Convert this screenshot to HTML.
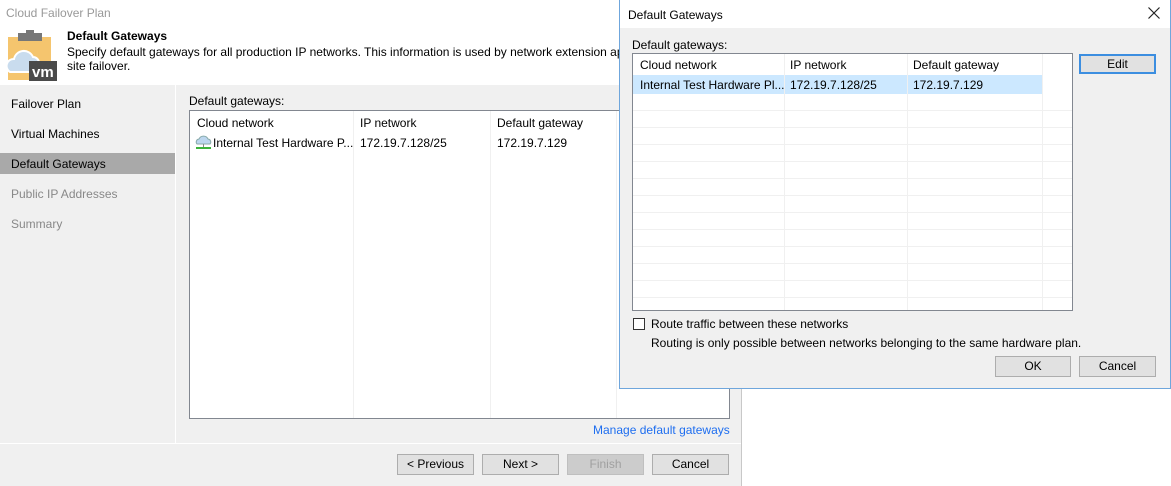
<!DOCTYPE html>
<html><head><style>
*{margin:0;padding:0;box-sizing:border-box}
body{width:1171px;height:486px;position:relative;background:#fff;font-family:"Liberation Sans",sans-serif;font-size:12px;color:#000;overflow:hidden}
.a{position:absolute;white-space:nowrap}
.btn{position:absolute;background:#e1e1e1;border:1px solid #adadad;text-align:center;line-height:19px;font-size:12px}
</style></head><body>
<!-- main window -->
<div class="a" style="left:0;top:0;width:742px;height:486px;background:#fff;border-right:1px solid #c8c8c8"></div>
<div class="a" style="left:6px;top:6px;color:#999;font-size:12px">Cloud Failover Plan</div>
<svg class="a" style="left:7px;top:29px" width="50" height="52" viewBox="0 0 50 52">
<rect x="1" y="8" width="43" height="43" fill="#f5c56e"/>
<rect x="11" y="4" width="24" height="8" fill="#777"/><rect x="19" y="1" width="8" height="6" fill="#777"/>
<path d="M3 43 a7 7 0 0 1 4 -13 a10 10 0 0 1 19 -2 a6 6 0 0 1 6 6 L32 43 Z" fill="#c9dcee" stroke="#fff" stroke-width="2"/>
<rect x="22" y="32" width="28" height="20" fill="#4a4a4a"/>
<text x="25" y="48" fill="#fff" font-size="15" font-weight="bold" font-family="Liberation Sans,sans-serif">vm</text>
</svg>
<div class="a" style="left:67px;top:29px;font-weight:bold">Default Gateways</div>
<div class="a" style="left:67px;top:45px">Specify default gateways for all production IP networks. This information is used by network extension app</div>
<div class="a" style="left:67px;top:59px">site failover.</div>
<!-- grey areas -->
<div class="a" style="left:0;top:85px;width:741px;height:401px;background:#f0f0f0"></div>
<div class="a" style="left:175px;top:85px;width:1px;height:358px;background:#fff"></div>
<div class="a" style="left:0;top:443px;width:741px;height:1px;background:#fff"></div>
<div class="a" style="left:0;top:153px;width:175px;height:21px;background:#a9a9a9"></div>
<div class="a" style="left:11px;top:97px">Failover Plan</div>
<div class="a" style="left:11px;top:127px">Virtual Machines</div>
<div class="a" style="left:11px;top:157px">Default Gateways</div>
<div class="a" style="left:11px;top:187px;color:#888">Public IP Addresses</div>
<div class="a" style="left:11px;top:217px;color:#888">Summary</div>
<div class="a" style="left:189px;top:94px">Default gateways:</div>
<div class="a" style="left:189px;top:110px;width:541px;height:309px;background:#fff;border:1px solid #828790"></div>
<div class="a" style="left:353px;top:111px;width:1px;height:307px;background:#f0f0f0"></div>
<div class="a" style="left:490px;top:111px;width:1px;height:307px;background:#f0f0f0"></div>
<div class="a" style="left:616px;top:111px;width:1px;height:307px;background:#f0f0f0"></div>
<div class="a" style="left:197px;top:116px">Cloud network</div>
<div class="a" style="left:360px;top:116px">IP network</div>
<div class="a" style="left:497px;top:116px">Default gateway</div>
<svg class="a" style="left:195px;top:134px" width="17" height="16" viewBox="0 0 17 16"><path d="M2 10 a3 3 0 0 1 2-5 a5 5 0 0 1 9 0 a3 3 0 0 1 2 5Z" fill="#bcd6ee" stroke="#8aa" stroke-width="1"/><rect x="8" y="10" width="1" height="3" fill="#888"/><rect x="1" y="13" width="15" height="2" fill="#3bb33b"/></svg>
<div class="a" style="left:213px;top:136px">Internal Test Hardware P...</div>
<div class="a" style="left:360px;top:136px">172.19.7.128/25</div>
<div class="a" style="left:497px;top:136px">172.19.7.129</div>
<div class="a" style="left:593px;top:423px;color:#1e6ef0">Manage default gateways</div>
<div class="btn" style="left:397px;top:454px;width:77px;height:21px">&lt; Previous</div>
<div class="btn" style="left:482px;top:454px;width:77px;height:21px">Next &gt;</div>
<div class="btn" style="left:567px;top:454px;width:77px;height:21px;background:#ccc;border-color:#bfbfbf;color:#a0a0a0">Finish</div>
<div class="btn" style="left:652px;top:454px;width:77px;height:21px">Cancel</div>
<!-- dialog -->
<div class="a" style="left:619px;top:0;width:552px;height:389px;background:#f0f0f0;border:1px solid #6fa6dc"></div>
<div class="a" style="left:620px;top:0;width:550px;height:28px;background:#fff"></div>
<div class="a" style="left:628px;top:8px">Default Gateways</div>
<svg class="a" style="left:1148px;top:7px" width="12" height="12" viewBox="0 0 12 12"><path d="M0.5 0.5 L11.5 11.5 M11.5 0.5 L0.5 11.5" stroke="#222" stroke-width="1.2"/></svg>
<div class="a" style="left:632px;top:38px">Default gateways:</div>
<div class="a" style="left:632px;top:53px;width:441px;height:258px;background:#fff;border:1px solid #828790"></div>
<div class="a" style="left:633px;top:75px;width:409px;height:19px;background:#cce8ff"></div>
<div class="a" style="left:633px;top:94px;width:439px;height:216px;background:repeating-linear-gradient(#fff 0 16px,#f0f0f0 16px 17px)"></div>
<div class="a" style="left:784px;top:54px;width:1px;height:256px;background:#f0f0f0"></div>
<div class="a" style="left:907px;top:54px;width:1px;height:256px;background:#f0f0f0"></div>
<div class="a" style="left:1042px;top:54px;width:1px;height:256px;background:#f0f0f0"></div>
<div class="a" style="left:640px;top:58px">Cloud network</div>
<div class="a" style="left:790px;top:58px">IP network</div>
<div class="a" style="left:913px;top:58px">Default gateway</div>
<div class="a" style="left:640px;top:78px">Internal Test Hardware Pl...</div>
<div class="a" style="left:790px;top:78px">172.19.7.128/25</div>
<div class="a" style="left:913px;top:78px">172.19.7.129</div>
<div class="btn" style="left:1079px;top:54px;width:77px;height:20px;border:2px solid #3c8ee0;line-height:16px">Edit</div>
<div class="a" style="left:633px;top:318px;width:12px;height:12px;border:1px solid #333;background:#fff"></div>
<div class="a" style="left:651px;top:317px">Route traffic between these networks</div>
<div class="a" style="left:651px;top:336px">Routing is only possible between networks belonging to the same hardware plan.</div>
<div class="btn" style="left:995px;top:356px;width:76px;height:21px">OK</div>
<div class="btn" style="left:1079px;top:356px;width:77px;height:21px">Cancel</div>
</body></html>
